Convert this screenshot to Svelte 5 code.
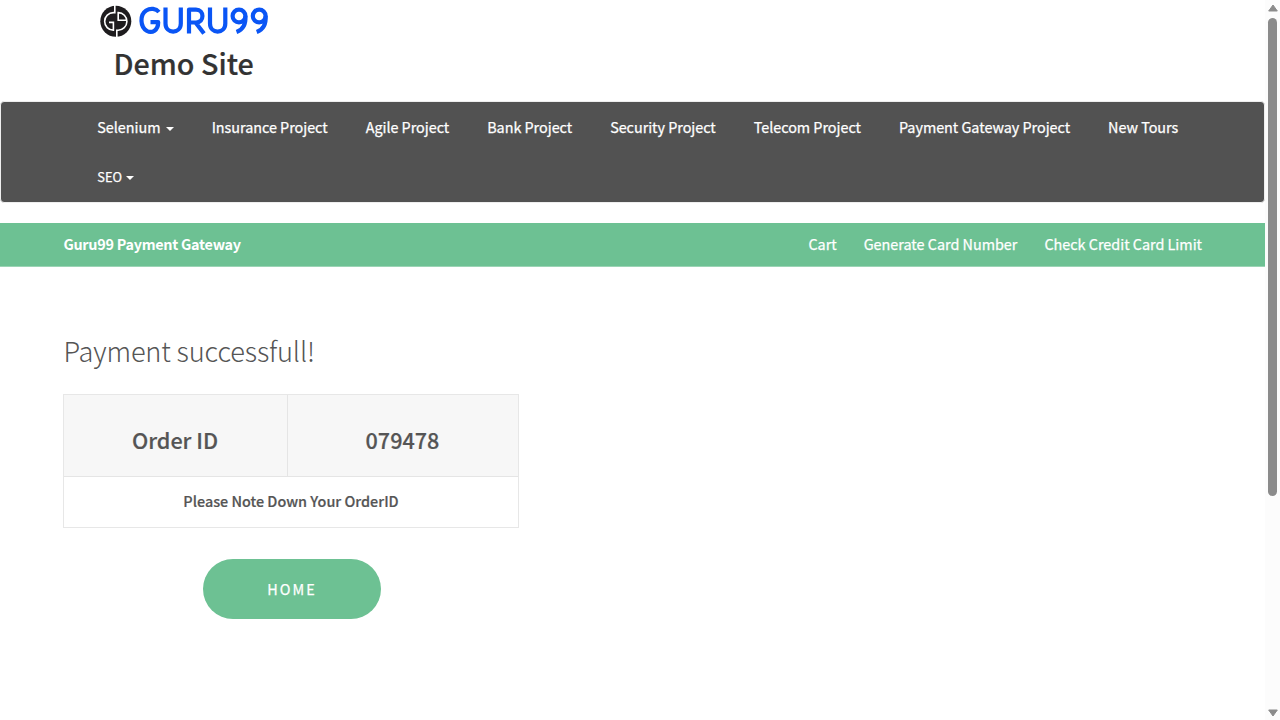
<script>
  const projects = [
    'Insurance Project',
    'Agile Project',
    'Bank Project',
    'Security Project',
    'Telecom Project',
    'Payment Gateway Project',
    'New Tours'
  ];
  const links = ['Cart', 'Generate Card Number', 'Check Credit Card Limit'];
</script>

<div class="window">
  <div class="page">
    <header>
      <svg class="logo" width="170" height="34" viewBox="0 0 170 34" aria-label="GURU99">
        <circle cx="16.8" cy="16.3" r="15.5" fill="#1e1c1e" />
        <g fill="none" stroke="#fff" stroke-width="1.6">
          <path d="M15.8 0V7.6H14.5A8.8 8.8 0 0 0 14.4 25.2V17.4H10" />
          <path d="M17.8 33V25.2H19A8.8 8.8 0 0 0 19.2 7.6V15.2H27" />
        </g>
        <g fill="none" stroke="#0a55f5" stroke-width="4.2" stroke-linejoin="round">
          <path d="M60 7C57 3.5 51.5 2.8 47.2 5.5C40.5 10 41 22 48 26C53 28.6 59.2 25.5 59.2 17.2H51.5" />
          <path d="M66.5 2.5V18.5C66.5 29.3 81.8 29.3 81.8 18.5V2.5" />
          <path d="M90 28.5V4.6H97C105.6 4.6 105.6 17.5 97 17.5H90M96.5 17.5L105 28.5" />
          <path d="M111 2.5V18.5C111 29.3 126.3 29.3 126.3 18.5V2.5" />
          <circle cx="140" cy="11" r="6.4" />
          <path d="M146.4 11C147 19.5 144.5 24.5 137.5 27" />
          <circle cx="160.2" cy="11" r="6.4" />
          <path d="M166.6 11C167.2 19.5 164.7 24.5 157.7 27" />
        </g>
      </svg>
      <h2>Demo Site</h2>
    </header>

    <nav class="projects">
      <a class="drop" href="#top">Selenium <i></i></a>
      {#each projects as name}
        <a href="#top">{name}</a>
      {/each}
      <a class="drop seo" href="#top">SEO <i></i></a>
    </nav>

    <nav class="gateway">
      <strong>Guru99 Payment Gateway</strong>
      <div class="links">
        {#each links as name}
          <a href="#top">{name}</a>
        {/each}
      </div>
    </nav>

    <main>
      <h1>Payment successfull!</h1>
      <div class="order">
        <div class="cell">Order ID</div>
        <div class="cell">079478</div>
        <div class="note">Please Note Down Your OrderID</div>
      </div>
      <a class="home" href="#top">HOME</a>
    </main>
  </div>
  <div class="scrollbar">
    <svg width="10" height="8" viewBox="0 0 10 8"><path d="M5 1L9.3 7H.7Z" fill="#8b8b8b" stroke="#8b8b8b" stroke-linejoin="round" /></svg>
    <span></span>
    <svg width="10" height="8" viewBox="0 0 10 8"><path d="M5 7L9.3 1H.7Z" fill="#8b8b8b" stroke="#8b8b8b" stroke-linejoin="round" /></svg>
  </div>
</div>

<style>
  :global(body) {
    margin: 0;
    overflow: hidden;
  }
  .window {
    display: flex;
    width: 1280px;
    height: 720px;
    overflow: hidden;
    background: #fff;
    font-family: 'Noto Sans CJK SC', sans-serif;
    font-size: 14.4px;
  }
  .window * {
    box-sizing: border-box;
  }
  a {
    color: #fff;
    text-decoration: none;
    white-space: nowrap;
    -webkit-text-stroke: 0.25px #fff;
  }
  .page {
    width: 1265px;
  }
  header {
    height: 101px;
    padding: 5px 0 0 99px;
  }
  .logo {
    display: block;
  }
  h2 {
    margin: 4px 0 0 14.5px;
    font-size: 28.7px;
    font-weight: 500;
    line-height: 40px;
    color: #333;
    -webkit-text-stroke: 0.2px #333;
  }
  .projects {
    display: flex;
    flex-wrap: wrap;
    align-content: flex-start;
    width: 1265px;
    height: 102px;
    padding: 0 60px 0 77.3px;
    border: 1px solid #eee;
    border-radius: 4px;
    background: #525252;
    letter-spacing: -0.03px;
  }
  .projects a {
    height: 50px;
    padding: 0 19px;
    line-height: 50px;
  }
  .drop i {
    display: inline-block;
    margin-left: 2px;
    vertical-align: 2px;
    border: 4px solid transparent;
    border-top-color: #fff;
    border-bottom: 0;
  }
  .projects .seo {
    font-size: 12.8px;
  }
  .seo i {
    margin-left: 1px;
  }
  .gateway {
    display: flex;
    justify-content: space-between;
    height: 44px;
    margin-top: 20px;
    padding: 0 63px 0 63.4px;
    border-bottom: 1px solid #9bd4b5;
    background: #6dc193;
    line-height: 41px;
  }
  strong {
    color: #fff;
    letter-spacing: -0.27px;
  }
  .links {
    display: flex;
    gap: 27px;
    letter-spacing: -0.01px;
  }
  main {
    display: flex;
    flex-direction: column;
    width: 519px;
    padding: 63px 0 0 63px;
  }
  h1 {
    margin: 0 0 0 0.5px;
    font-size: 27.2px;
    font-weight: 200;
    line-height: 40px;
    letter-spacing: -0.15px;
    color: #555;
  }
  .order {
    display: grid;
    grid-template-columns: 224px 230px;
    grid-template-rows: 82px 50px;
    margin-top: 24px;
    border: 1px solid #e7e7e7;
    width: 456px;
    text-align: center;
    color: #555;
    font-weight: 500;
    -webkit-text-stroke: 0.2px #555;
  }
  .cell {
    background: #f7f7f7;
    font-size: 21.6px;
    line-height: 89px;
    border-bottom: 1px solid #e5e5e5;
    padding-right: 1px;
  }
  .cell:first-child {
    border-right: 1px solid #e5e5e5;
  }
  .note {
    grid-column: 1 / -1;
    line-height: 48px;
  }
  .home {
    align-self: center;
    width: 178px;
    height: 60px;
    margin: 31px 0 0 2px;
    border-radius: 30px;
    background: #6dc193;
    line-height: 60px;
    text-align: center;
    letter-spacing: 2px;
  }
  .scrollbar {
    display: flex;
    flex-direction: column;
    align-items: center;
    width: 15px;
    height: 720px;
    padding: 4px 0 3px;
    background: #fcfcfc;
  }
  .scrollbar span {
    width: 9px;
    height: 478px;
    margin: 6px 0 auto;
    border-radius: 5px;
    background: #8b8b8b;
  }
</style>
